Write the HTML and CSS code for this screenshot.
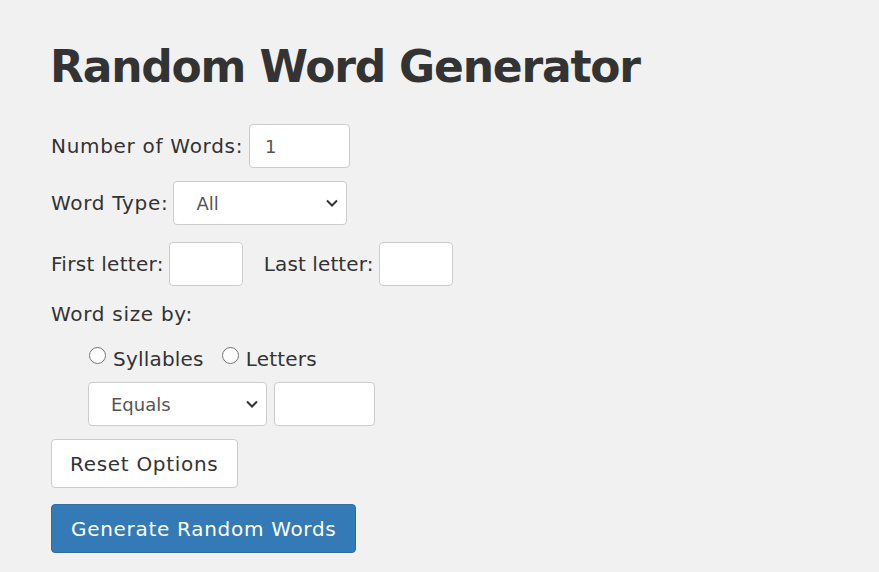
FILE: index.html
```html
<!DOCTYPE html>
<html>
<head>
<meta charset="utf-8">
<link rel="stylesheet" href="styles.css">
</head>
<body>
<div class="page">
  <h1 class="title">Random Word Generator</h1>
  <div class="row row-num">
    <label class="lbl">Number of Words:</label>
    <input class="field field-num" type="text" value="1">
  </div>
  <div class="row row-type">
    <label class="lbl">Word Type:</label>
    <select class="sel sel-type"><option>All</option></select>
  </div>
  <div class="row row-letters">
    <label class="lbl lbl-tight">First letter:</label>
    <input class="field field-letter" type="text">
    <label class="lbl lbl-tight lbl-last">Last letter:</label>
    <input class="field field-letter" type="text">
  </div>
  <div class="row row-size">
    <span class="lbl">Word size by:</span>
  </div>
  <div class="indent">
    <div class="radios">
      <label class="radio-lbl"><input class="radio" type="radio" name="s">Syllables</label>
      <label class="radio-lbl"><input class="radio" type="radio" name="s">Letters</label>
    </div>
    <div class="row row-cmp">
      <select class="sel sel-cmp"><option>Equals</option></select>
      <input class="field field-num" type="text">
    </div>
  </div>
  <button class="btn btn-reset">Reset Options</button>
  <button class="btn btn-gen">Generate Random Words</button>
</div>
</body>
</html>
```
FILE: styles.css
```css
html, body {
  margin: 0;
  padding: 0;
  background: #f1f1f1;
}
body {
  font-family: "DejaVu Sans", "Noto Sans", sans-serif;
  color: #333333;
}
.page {
  padding: 0 51px;
  display: flex;
  flex-direction: column;
  align-items: flex-start;
}
.title {
  font-size: 44px;
  font-weight: 700;
  margin: 40px 0 0 -1px;
  line-height: 54px;
  letter-spacing: -1.2px;
}
.row {
  display: flex;
  align-items: center;
}
.lbl {
  font-size: 20px;
  letter-spacing: 0.7px;
}
.lbl-tight {
  letter-spacing: 0.3px;
}
.field, .sel {
  box-sizing: border-box;
  height: 44px;
  border: 1px solid #cccccc;
  border-radius: 4px;
  background: #ffffff;
  font-family: inherit;
  font-size: 18px;
  color: #555555;
  outline: none;
}
.field {
  padding: 0 15px;
}
.field-num {
  width: 101px;
  margin-left: 6px;
}
.row-num { margin-top: 30px; }
.row-type { margin-top: 13px; }
.row-letters { margin-top: 17px; }
.field-letter {
  width: 74px;
  margin-left: 5px;
}
.lbl-last {
  margin-left: 21px;
  letter-spacing: 0.1px;
}
.sel {
  appearance: none;
  -webkit-appearance: none;
  padding: 0 0 0 22px;
  background-image: url("data:image/svg+xml,%3Csvg xmlns='http://www.w3.org/2000/svg' width='12' height='8' viewBox='0 0 12 8'%3E%3Cpath d='M1 1.5l5 5 5-5' fill='none' stroke='%23333' stroke-width='2'/%3E%3C/svg%3E");
  background-repeat: no-repeat;
  background-position: right 8px center;
}
.sel-type {
  width: 174px;
  margin-left: 5px;
}
.row-size { margin-top: 16px; height: 24px; }
.indent {
  padding-left: 37px;
  display: flex;
  flex-direction: column;
}
.radios {
  display: flex;
  align-items: center;
  margin-top: 21px;
  gap: 17px;
}
.radio-lbl {
  display: flex;
  align-items: center;
  font-size: 20px;
  letter-spacing: 0.2px;
}
.radio {
  appearance: none;
  -webkit-appearance: none;
  width: 17px;
  height: 17px;
  border: 1px solid #767676;
  border-radius: 50%;
  background: #ffffff;
  margin: 0 7px 0 1px;
  position: relative;
  top: -4px;
}
.row-cmp { margin-top: 11px; }
.sel-cmp {
  width: 179px;
}
.row-cmp .field-num { margin-left: 7px; }
.btn {
  font-family: inherit;
  font-size: 20px;
  letter-spacing: 0.7px;
  border-radius: 4px;
  height: 49px;
  padding: 0 18px;
  cursor: pointer;
}
.btn-reset {
  margin-top: 13px;
  background: #ffffff;
  border: 1px solid #cccccc;
  color: #333333;
}
.btn-gen {
  margin-top: 16px;
  background: #337ab7;
  border: 1px solid #2e6da4;
  color: #ffffff;
  padding: 0 19px;
}
```
